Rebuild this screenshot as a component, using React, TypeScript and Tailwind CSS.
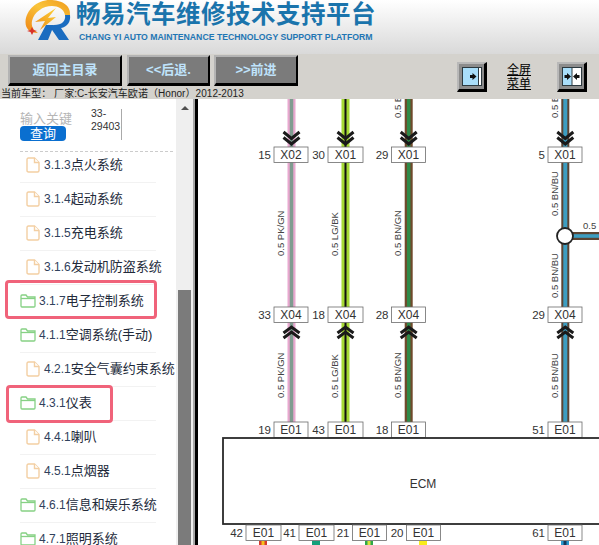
const CJK = "font-['Liberation_Sans','Noto_Sans_CJK_SC',sans-serif]";

const treeItems = [
  { label: "3.1.3", name: "点火系统", kind: "file" },
  { label: "3.1.4", name: "起动系统", kind: "file" },
  { label: "3.1.5", name: "充电系统", kind: "file" },
  { label: "3.1.6", name: "发动机防盗系统", kind: "file" },
  { label: "3.1.7", name: "电子控制系统", kind: "folder" },
  { label: "4.1.1", name: "空调系统(手动)", kind: "folder" },
  { label: "4.2.1", name: "安全气囊约束系统", kind: "file" },
  { label: "4.3.1", name: "仪表", kind: "folder" },
  { label: "4.4.1", name: "喇叭", kind: "file" },
  { label: "4.5.1", name: "点烟器", kind: "file" },
  { label: "4.6.1", name: "信息和娱乐系统", kind: "folder" },
  { label: "4.7.1", name: "照明系统", kind: "folder" },
];

function FileIcon() {
  return (
    <svg width="14" height="16" viewBox="0 0 14 16" className="shrink-0" fill="#fff" stroke="#f3cfa3" strokeWidth="1.4">
      <path d="M1 2.5 Q1 1 2.5 1 H8.5 L13 5.5 V13.5 Q13 15 11.5 15 H2.5 Q1 15 1 13.5 Z" />
      <path d="M8.5 1 V5.5 H13" />
    </svg>
  );
}

function FolderIcon() {
  return (
    <svg width="16" height="14" viewBox="0 0 16 14" className="shrink-0" fill="#fff" stroke="#86d184" strokeWidth="1.3">
      <path d="M1 2 Q1 1 2 1 H6 L7.5 3 H15 V12 Q15 13 14 13 H2 Q1 13 1 12 Z" />
      <path d="M1 4.5 H15" />
    </svg>
  );
}

function BevelButton({ label, width }: { label: string; width: string }) {
  return (
    <button
      className={`${width} h-[31px] bg-[#7b7b7b] border-t-[2px] border-l-[2px] border-r-[2px] border-b-[3px] border-t-[#b4b4b4] border-l-[#b4b4b4] border-r-black border-b-black text-[#bfe3fb] text-[13px] font-bold text-center`}
    >
      {label}
    </button>
  );
}

function ToggleIcon({ both }: { both?: boolean }) {
  return (
    <div className="w-[30px] h-[30px] bg-[#8c8c8c] border-t-[2px] border-l-[2px] border-t-[#b8b8b8] border-l-[#b8b8b8] border-r-[3px] border-b-[3px] border-r-black border-b-black pl-[3px] pt-[3px]">
      <svg width="20" height="19" viewBox="0 0 20 19" className="block">
        <rect x="0" y="0" width="20" height="19" fill="#2d3a40" />
        {both ? (
          <g>
            <rect x="1" y="1" width="8.5" height="17" fill="#a9defa" />
            <rect x="10.5" y="1" width="8.5" height="17" fill="#fff" />
            <path d="M5 6 L9 9.5 L5 13 Z M2.5 8 h2.5 v3 h-2.5 Z" fill="#111" />
            <path d="M15 6 L11 9.5 L15 13 Z M15 8 h2.5 v3 h-2.5 Z" fill="#111" />
          </g>
        ) : (
          <g>
            <rect x="1" y="1" width="15" height="17" fill="#a9defa" />
            <rect x="17" y="1" width="2" height="17" fill="#fff" />
            <path d="M10.5 6 L14.5 9.5 L10.5 13 Z M8 8 h2.5 v3 h-2.5 Z" fill="#111" />
          </g>
        )}
      </svg>
    </div>
  );
}

function Logo() {
  return (
    <svg width="46" height="41" viewBox="0 0 46 41" className="shrink-0">
      <defs>
        <linearGradient id="ring" x1="0" y1="1" x2="1" y2="0">
          <stop offset="0" stopColor="#ee8412" />
          <stop offset="0.55" stopColor="#f9c43a" />
          <stop offset="1" stopColor="#f09a1c" />
        </linearGradient>
        <linearGradient id="bolt" x1="0" y1="1" x2="1" y2="0">
          <stop offset="0" stopColor="#ef8c16" />
          <stop offset="1" stopColor="#fbd13a" />
        </linearGradient>
      </defs>
      <path d="M45 15 C46 5 36 0 25 0 C12 0 1 10 0.5 22 C0.5 29 5 33 13 33 C8 30 6 26 7 21 C9 12 18 6 27 6 C33 6 39 9 40 15 Z" fill="url(#ring)" />
      <path d="M31 8 L23 18 L31 17 L15 30 L20 21 L10 22 Z" fill="url(#bolt)" />
      <path d="M13 40 L21 25 H29 L23 40 Z" fill="#1a6cc0" />
      <path d="M29 25 C37 25 41 21 40 15 L45 15 C46 22 42 27 36 28 L44 40 H34 L25 27 Z" fill="#1a6cc0" />
      <path d="M7 27 L8.5 30 L12 31 L8.5 32 L7 35 L5.5 32 L2 31 L5.5 30 Z" fill="#d8332b" />
    </svg>
  );
}

function Connector({ x, y, w = 34, pin, code }: { x: number; y: number; w?: number; pin: string; code: string }) {
  return (
    <g>
      <rect x={x} y={y} width={w} height={15.5} fill="#fff" stroke="#6b6b6b" strokeWidth="0.8" />
      <text x={x + w / 2} y={y + 12} textAnchor="middle" fontSize="12" fill="#333">{code}</text>
      <text x={x - 3} y={y + 12} textAnchor="end" fontSize="11.5" fill="#333">{pin}</text>
    </g>
  );
}

function Chevrons({ x, y, up }: { x: number; y: number; up?: boolean }) {
  const d = up
    ? `M${x - 8} ${y + 6} L${x} ${y} L${x + 8} ${y + 6} M${x - 8} ${y + 11} L${x} ${y + 5} L${x + 8} ${y + 11}`
    : `M${x - 8} ${y} L${x} ${y + 6.5} L${x + 8} ${y} M${x - 8} ${y + 5.5} L${x} ${y + 12} L${x + 8} ${y + 5.5}`;
  return <path d={d} fill="none" stroke="#1a1a1a" strokeWidth="3" />;
}

function Wire({ x, y1, y2, outer, inner, w = 8, iw = 3 }: { x: number; y1: number; y2: number; outer: string; inner: string; w?: number; iw?: number }) {
  return (
    <g>
      <rect x={x - w / 2} y={y1} width={w} height={y2 - y1} fill={outer} />
      <rect x={x - iw / 2} y={y1} width={iw} height={y2 - y1} fill={inner} />
    </g>
  );
}

function VLabel({ x, y, text }: { x: number; y: number; text: string }) {
  return (
    <text x={x} y={y} fontSize="9.5" fill="#444" transform={`rotate(-90 ${x} ${y})`}>{text}</text>
  );
}

function Diagram() {
  // coordinates below are page pixels, panel starts at x=198, y=99
  const ox = -198;
  const oy = -99;
  return (
    <svg width="401" height="446" viewBox="0 0 401 446" className="block">
      <g transform={`translate(${ox} ${oy})`} fontFamily="'Liberation Sans', sans-serif">
        <Wire x={291.5} y1={99} y2={422} outer="#e8a8cf" inner="#7f9c90" iw={3.5} />
        <Wire x={345.5} y1={99} y2={422} outer="#a6d936" inner="#111" iw={2} />
        <Wire x={408.7} y1={99} y2={422} outer="#6f4a2c" inner="#2f8a48" iw={3.5} />
        <Wire x={565.3} y1={99} y2={422} outer="#5c4432" inner="#3d9dc0" iw={4} />
        <rect x={570} y={232} width={30} height={8} fill="#5c4432" />
        <rect x={570} y={234.2} width={30} height={3.6} fill="#3d9dc0" />
        <circle cx={565} cy={236} r={8} fill="#fff" stroke="#222" strokeWidth="1.8" />

        <Chevrons x={291.5} y={132} />
        <Chevrons x={345.5} y={132} />
        <Chevrons x={408.7} y={132} />
        <Chevrons x={565.3} y={132} />
        <Chevrons x={291.5} y={327} up />
        <Chevrons x={345.5} y={327} up />
        <Chevrons x={408.7} y={327} up />
        <Chevrons x={565.3} y={327} up />

        <Connector x={274} y={147} pin="15" code="X02" />
        <Connector x={328} y={147} pin="30" code="X01" w={35} />
        <Connector x={391.5} y={147} pin="29" code="X01" />
        <Connector x={548} y={147} pin="5" code="X01" />
        <Connector x={274} y={307} pin="33" code="X04" />
        <Connector x={328} y={307} pin="18" code="X04" w={35} />
        <Connector x={391.5} y={307} pin="28" code="X04" />
        <Connector x={548} y={307} pin="29" code="X04" />
        <Connector x={274} y={422} pin="19" code="E01" />
        <Connector x={328} y={422} pin="43" code="E01" w={35} />
        <Connector x={391.5} y={422} pin="18" code="E01" />
        <Connector x={548} y={422} pin="51" code="E01" />

        <VLabel x={401} y={118} text="0.5 BN/GN" />
        <VLabel x={557.5} y={118} text="0.5 BN/BU" />
        <VLabel x={283.5} y={256} text="0.5 PK/GN" />
        <VLabel x={337.5} y={256} text="0.5 LG/BK" />
        <VLabel x={401} y={256} text="0.5 BN/GN" />
        <VLabel x={557.5} y={216} text="0.5 BN/BU" />
        <VLabel x={557.5} y={298} text="0.5 BN/BU" />
        <VLabel x={283.5} y={398} text="0.5 PK/GN" />
        <VLabel x={337.5} y={398} text="0.5 LG/BK" />
        <VLabel x={401} y={398} text="0.5 BN/GN" />
        <VLabel x={557.5} y={398} text="0.5 BN/BU" />
        <text x={583} y={229} fontSize="9.5" fill="#444">0.5 BN/BU</text>

        <rect x={223} y={438} width={390} height={86} fill="#fff" stroke="#2a2a2a" strokeWidth="1.8" />
        <text x={423} y={487.5} textAnchor="middle" fontSize="12" fill="#333">ECM</text>

        <Connector x={246} y={525} pin="42" code="E01" w={35} />
        <Connector x={299} y={525} pin="41" code="E01" w={35} />
        <Connector x={352.5} y={525} pin="21" code="E01" />
        <Connector x={406.5} y={525} pin="20" code="E01" />
        <Connector x={548} y={525} pin="61" code="E01" />
        <Wire x={263} y1={541} y2={545} outer="#d83a2c" inner="#f4c21c" />
        <Wire x={316} y1={541} y2={545} outer="#15a07a" inner="#15a07a" />
        <Wire x={369} y1={541} y2={545} outer="#2fa84a" inner="#d7e23a" />
        <Wire x={423} y1={541} y2={545} outer="#f8ec1a" inner="#f8ec1a" />
        <Wire x={565} y1={541} y2={545} outer="#2a9ad0" inner="#123a5c" />
      </g>
    </svg>
  );
}

export default function App() {
  return (
    <div className={`w-[599px] h-[545px] overflow-hidden flex flex-col bg-white ${CJK}`}>
      <header className="h-[54px] shrink-0 bg-gradient-to-b from-white to-[#d9d9d9] flex pl-[25px] gap-[5px]">
        <Logo />
        <div className="flex flex-col pt-[1px]">
          <div className="text-[#1a74ac] text-[24.5px] leading-[28px] font-bold tracking-[0.5px] whitespace-nowrap">畅易汽车维修技术支持平台</div>
          <div className="text-[#1f76b4] text-[8.7px] leading-[12px] mt-[2px] ml-[3px] font-bold whitespace-nowrap">CHANG YI AUTO MAINTENANCE TECHNOLOGY SUPPORT PLATFORM</div>
        </div>
      </header>

      <div className="h-[45px] shrink-0 bg-[#d4d2cd] relative">
        <div className="flex gap-[4px] pl-[8px] pt-[1px]">
          <div className="mr-[1px]"><BevelButton label="返回主目录" width="w-[114px]" /></div>
          <BevelButton label="<<后退." width="w-[83px]" />
          <BevelButton label=">>前进" width="w-[84px]" />
        </div>
        <div className="absolute left-[457px] top-[8px] flex items-center">
          <ToggleIcon />
          <div className="w-[24px] ml-[20px] mr-[26px] text-[12px] leading-[14px] text-black underline text-center">全屏<br />菜单</div>
          <ToggleIcon both />
        </div>
        <div className="absolute left-[1px] top-[34px] text-[10px] leading-[12px] text-[#222] whitespace-nowrap tracking-[0.05px]">当前车型： 厂家:C-长安汽车欧诺（Honor）2012-2013</div>
      </div>

      <div className="flex flex-1 min-h-0">
        <aside className="w-[193px] shrink-0 flex bg-white">
          <div className="w-[176px] shrink-0 overflow-hidden relative pl-[20px]">
            <div className="h-[53px] border-b border-dashed border-[#cccccc] w-[153px] flex items-start pt-[10px]">
              <div className="w-[71px]">
                <div className="text-[13px] leading-[15px] text-[#b5b5b5] mt-[2px] whitespace-nowrap">输入关键</div>
                <div className="w-[46px] h-[15px] rounded-[4px] bg-[#0a6fd0] text-white text-[13px] leading-[15px] text-center">查询</div>
              </div>
              <div className="w-[31px] text-[#333] text-[10.5px] leading-[13px] border-r border-[#aaa] h-[31px] whitespace-nowrap pr-[1px]">
                <div className="-mt-[2px]">33-<br />29403</div>
              </div>
            </div>
            <ul className="w-[136px] -mt-[3px]">
              {treeItems.map((item) => (
                <li
                  key={item.label}
                  className={`h-[34px] pb-[2px] border-b border-[#f2f2f2] flex items-center whitespace-nowrap ${item.kind === "file" ? "pl-[6px] gap-[4px]" : "gap-[3px]"}`}
                >
                  {item.kind === "file" ? <FileIcon /> : <FolderIcon />}
                  <span className="text-[#30415c] text-[12px]">{item.label}</span>
                  <span className={`text-[#222a3a] text-[13px] ${item.kind === "file" ? "-ml-[4px]" : "-ml-[3px]"}`}>{item.name}</span>
                </li>
              ))}
            </ul>
            <div className="absolute left-[5px] top-[181px] w-[152px] h-[39px] rounded-[4px] border-[3px] border-[#f0637a]" />
            <div className="absolute left-[6px] top-[286px] w-[107px] h-[38px] rounded-[4px] border-[3px] border-[#f0637a]" />
          </div>
          <div className="w-[17px] shrink-0 bg-[#efefef] flex flex-col items-center">
            <div className="h-[18px] flex items-center justify-center">
              <div className="w-0 h-0 border-l-[4px] border-r-[4px] border-b-[4px] border-l-transparent border-r-transparent border-b-[#505050]" />
            </div>
            <div className="w-[13px] h-[255px] mt-[173px] bg-[#7b7b7b]" />
          </div>
        </aside>
        <div className="w-[2px] shrink-0 bg-[#a8a8a8]" />
        <div className="w-[3px] shrink-0 bg-black" />
        <main className="flex-1 min-w-0 overflow-hidden bg-white">
          <Diagram />
        </main>
      </div>
    </div>
  );
}
